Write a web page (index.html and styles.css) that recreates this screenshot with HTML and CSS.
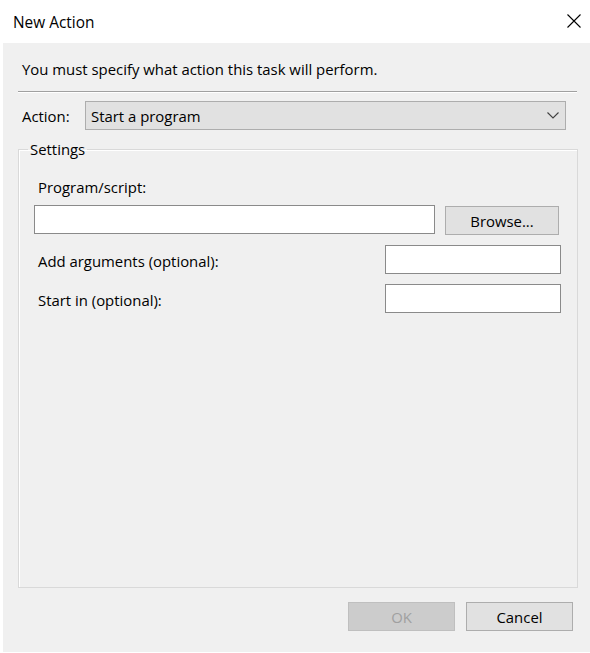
FILE: index.html
```html
<!DOCTYPE html>
<html>
<head>
<meta charset="utf-8">
<link rel="stylesheet" href="styles.css">
</head>
<body>
<div class="window">
  <div class="titlebar">
    <span class="title">New Action</span>
    <svg class="close" width="14" height="14" viewBox="0 0 14 14"><path d="M0.5 0.5 L13.5 13.5 M13.5 0.5 L0.5 13.5" stroke="#000" stroke-width="1.1" fill="none"/></svg>
  </div>
  <div class="client">
    <div class="intro">You must specify what action this task will perform.</div>
    <div class="separator"></div>
    <div class="action-row">
      <span class="action-label">Action:</span>
      <div class="combo">
        <span>Start a program</span>
        <svg width="12" height="7" viewBox="0 0 12 7"><path d="M0.5 0.5 L6 6 L11.5 0.5" stroke="#404040" stroke-width="1.1" fill="none"/></svg>
      </div>
    </div>
    <fieldset class="group">
      <legend>Settings</legend>
      <div class="field-label first">Program/script:</div>
      <div class="row-program">
        <div class="textbox wide"></div>
        <div class="button browse">Browse...</div>
      </div>
      <div class="row-opt">
        <span class="opt-label">Add arguments (optional):</span>
        <div class="textbox short"></div>
      </div>
      <div class="row-opt">
        <span class="opt-label">Start in (optional):</span>
        <div class="textbox short"></div>
      </div>
    </fieldset>
    <div class="buttons">
      <div class="button disabled">OK</div>
      <div class="button">Cancel</div>
    </div>
  </div>
</div>
</body>
</html>
```
FILE: styles.css
```css
html, body {
  margin: 0;
  padding: 0;
  background: #ffffff;
}
body {
  font-family: "Open Sans", "Noto Sans", sans-serif;
  font-size: 14.9px;
  color: #000;
}
.window {
  width: 590px;
  height: 653px;
  background: #ffffff;
  display: flex;
  flex-direction: column;
}
.titlebar {
  height: 43px;
  flex: none;
  display: flex;
  align-items: center;
  justify-content: space-between;
  padding: 0 9px 0 13px;
  box-sizing: border-box;
}
.title {
  font-size: 15.4px;
  line-height: 20px;
  margin-top: 2px;
}
.close {
  display: block;
  margin-top: -1px;
}
.client {
  flex: 1;
  margin: 0 0 1px 3px;
  background: #f0f0f0;
  padding: 0 12px 0 15px;
  display: flex;
  flex-direction: column;
}
.intro {
  margin-top: 16px;
  line-height: 20px;
  padding-left: 4px;
}
.separator {
  margin-top: 12px;
  height: 0;
  border-top: 1px solid #a0a0a0;
  border-bottom: 1px solid #ffffff;
  margin-right: 1px;
}
.action-row {
  margin-top: 8px;
  height: 29px;
  display: flex;
  align-items: center;
}
.action-label {
  width: 63px;
  padding-left: 4px;
  line-height: 20px;
}
.combo {
  flex: 1;
  height: 29px;
  box-sizing: border-box;
  margin-right: 12px;
  background: #e1e1e1;
  border: 1px solid #adadad;
  display: flex;
  align-items: center;
  justify-content: space-between;
  padding: 0 6px 0 5px;
}
.combo svg {
  display: block;
}
.group {
  margin: 9px 0 0 0;
  padding: 0;
  border: 1px solid #d9d9d9;
  box-shadow: inset 1px 1px 0 #ffffff;
  flex: 1;
  min-width: 0;
}
.group legend {
  margin-left: 9px;
  padding: 0 2px;
  line-height: 20px;
}
.field-label {
  line-height: 20px;
  margin-left: 19px;
}
.field-label.first {
  margin-top: 18px;
}
.row-program {
  margin-top: 8px;
  display: flex;
  align-items: flex-start;
}
.textbox {
  height: 29px;
  box-sizing: border-box;
  background: #ffffff;
  border: 1px solid #8a8a8a;
}
.textbox.wide {
  width: 401px;
  margin-left: 15px;
}
.button {
  height: 29px;
  box-sizing: border-box;
  background: #e1e1e1;
  border: 1px solid #adadad;
  display: flex;
  align-items: center;
  justify-content: center;
  line-height: 20px;
}
.button.browse {
  width: 114px;
  margin-left: 10px;
  margin-top: 1px;
}
.row-opt {
  margin-top: 10px;
  display: flex;
  align-items: flex-start;
}
.opt-label {
  flex: 1;
  margin-left: 19px;
  margin-top: 6px;
  line-height: 20px;
}
.textbox.short {
  width: 176px;
  margin-right: 16px;
}
.buttons {
  flex: none;
  margin-top: 14px;
  margin-bottom: 21px;
  display: flex;
  justify-content: flex-end;
  gap: 11px;
  padding-right: 5px;
}
.buttons .button {
  width: 107px;
}
.button.disabled {
  background: #cccccc;
  border-color: #bfbfbf;
  color: #a0a0a0;
}
```
